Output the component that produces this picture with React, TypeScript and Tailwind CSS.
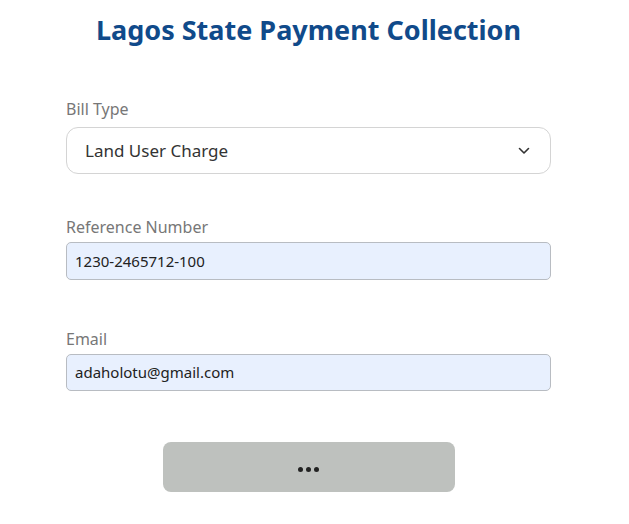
export default function App() {
    return (
        <div
            className="min-h-[524px] w-[617px] bg-white"
            style={{ fontFamily: '"Noto Sans", "Open Sans", sans-serif' }}
        >
            <div className="mx-auto w-[485px] pt-[12px]">
                {/* 标题 */}
                <h1 className="text-center text-[27px] font-bold leading-[36px] text-[#104a8a]">
                    Lagos State Payment Collection
                </h1>

                {/* 账单类型 */}
                <div className="mt-[50px]">
                    <label className="block text-[16px] leading-[22px] text-[#777]">Bill Type</label>
                    <div className="mt-[7px] flex h-[47px] items-center justify-between rounded-[12px] border border-[#d4d4d4] pl-[18px] pr-[20px]">
                        <span className="text-[17px] text-[#333]">Land User Charge</span>
                        <svg width="12" height="8" viewBox="0 0 12 8" fill="none">
                            <path d="M1.5 1.5L6 6L10.5 1.5" stroke="#333" strokeWidth="1.6" strokeLinecap="round" strokeLinejoin="round" />
                        </svg>
                    </div>
                </div>

                {/* 参考号 */}
                <div className="mt-[42px]">
                    <label className="block text-[16px] leading-[22px] text-[#777]">Reference Number</label>
                    <div className="mt-[4px] flex h-[38px] items-center rounded-[5px] border border-[#b8bcc2] bg-[#e8f0fe] px-[8px] text-[15px] text-[#222]">
                        1230-2465712-100
                    </div>
                </div>

                {/* 邮箱 */}
                <div className="mt-[48px]">
                    <label className="block text-[16px] leading-[22px] text-[#777]">Email</label>
                    <div className="mt-[4px] flex h-[37px] items-center rounded-[5px] border border-[#b8bcc2] bg-[#e8f0fe] px-[8px] text-[15px] text-[#222]">
                        adaholotu@gmail.com
                    </div>
                </div>

                {/* 提交按钮 */}
                <div className="mt-[51px] flex justify-center">
                    <button className="flex h-[50px] w-[292px] items-center justify-center gap-[3px] rounded-[8px] bg-[#bec1be] pt-[4px]">
                        <span className="h-[5px] w-[5px] rounded-full bg-[#222]"></span>
                        <span className="h-[5px] w-[5px] rounded-full bg-[#222]"></span>
                        <span className="h-[5px] w-[5px] rounded-full bg-[#222]"></span>
                    </button>
                </div>
            </div>
        </div>
    )
}
